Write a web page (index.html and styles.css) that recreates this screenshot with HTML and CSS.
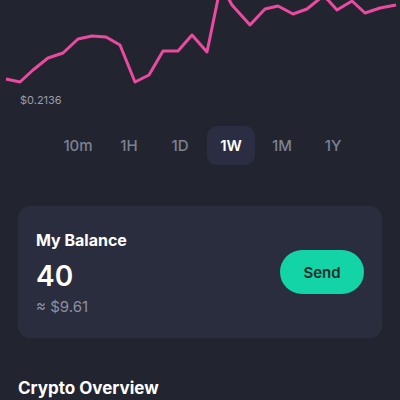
FILE: index.html
```html
<html>
    <head>
        <link rel="stylesheet" href="styles.css">
    </head>
    <body>
        <div class="chart">
            <svg width="400" height="92" viewBox="0 0 400 92">
                <polyline class="line" points="6,79 20,82 33,70 48,58 63,53 78,39 92,36 106,37 120,45 135,82 149,75 163,51 178,51 192,35 207,52 219,-6 226,-6 232,5 250,25 265,9 278,6 293,14 307,9 318,0 323,-4 328,0 337,10 352,1 365,13 380,8 396,5"/>
            </svg>
            <div class="low">$0.2136</div>
        </div>
        <div class="tabs">
            <div class="tab">10m</div>
            <div class="tab">1H</div>
            <div class="tab">1D</div>
            <div class="tab active">1W</div>
            <div class="tab">1M</div>
            <div class="tab">1Y</div>
        </div>
        <div class="card">
            <div class="balance">
                <div class="title">My Balance</div>
                <div class="amount">40</div>
                <div class="fiat">≈ $9.61</div>
            </div>
            <button class="send">Send</button>
        </div>
        <div class="section">Crypto Overview</div>
    </body>
</html>
```
FILE: styles.css
```css
body {
    margin: 0;
    background: #22252f;
    font-family: Inter, "Noto Sans", sans-serif;
    color: #ffffff;
    width: 400px;
    height: 400px;
    overflow: hidden;
}
.chart {
    height: 108px;
}
.chart svg {
    display: block;
}
.line {
    fill: none;
    stroke: #ea4a9f;
    stroke-width: 3;
    stroke-linejoin: round;
}
.low {
    margin-left: 20px;
    margin-top: 1px;
    font-size: 11px;
    color: #9a9dab;
}
.tabs {
    display: flex;
    justify-content: center;
    gap: 3px;
    padding-left: 11px;
    margin-top: 18px;
}
.tab {
    width: 48px;
    height: 39px;
    line-height: 39px;
    text-align: center;
    font-size: 15px;
    font-weight: 500;
    color: #7c8194;
    border-radius: 10px;
}
.active {
    background: #2b2e42;
    color: #ffffff;
    font-weight: 600;
}
.card {
    margin: 41px 18px 0 18px;
    height: 132px;
    background: #2a2d3e;
    border-radius: 12px;
    display: flex;
    align-items: center;
    justify-content: space-between;
    padding: 0 18px;
}
.balance {
    margin-top: 1px;
}
.title {
    font-size: 16px;
    font-weight: 700;
}
.amount {
    font-size: 28px;
    font-weight: 600;
    margin-top: 9px;
}
.fiat {
    font-size: 15px;
    color: #8c90a0;
    margin-top: 4px;
}
.send {
    width: 84px;
    height: 44px;
    border: none;
    border-radius: 22px;
    background: #12d4a7;
    color: #1b2b2e;
    font-family: Inter, "Noto Sans", sans-serif;
    font-size: 15px;
    font-weight: 600;
}
.section {
    margin: 40px 18px 0 18px;
    font-size: 17px;
    font-weight: 700;
}
```
